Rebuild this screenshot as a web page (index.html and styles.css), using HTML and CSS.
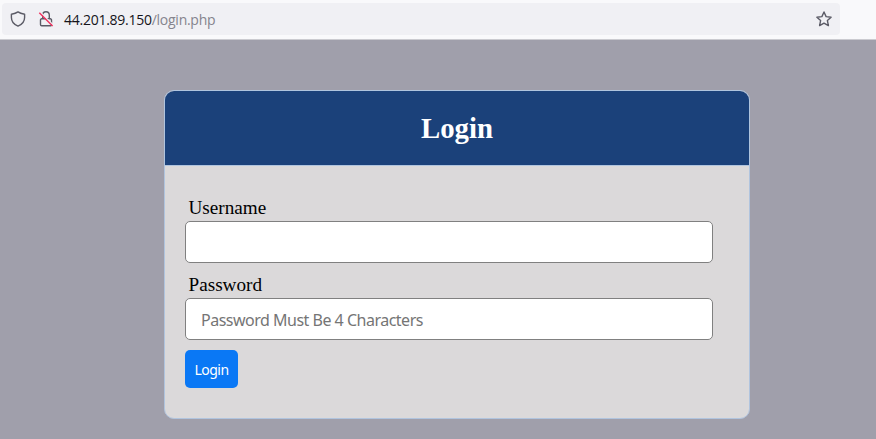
FILE: index.html
```html
<!DOCTYPE html>
<html lang="en">
<head>
<meta charset="utf-8">
<title>Login</title>
<link rel="stylesheet" href="styles.css">
</head>
<body>
<header class="toolbar">
  <div class="address">
    <svg class="icon shield" viewBox="0 0 16 16"><path d="M8 .9C6.500 2.100 4 2.900 1.400 3.200v3.200c0 3.700 2.600 7 6.600 8.700 4-1.700 6.600-5 6.600-8.700V3.200C12 2.900 9.500 2.100 8 .9z"/></svg>
    <svg class="icon lock" viewBox="0 0 16 16"><path d="M4.700 7.800V4a3.300 3.300 0 0 1 6.600 0v3.800M3.700 7.800h8.600a1.200 1.200 0 0 1 1.200 1.200v4.600a1.200 1.200 0 0 1-1.200 1.200H3.700a1.200 1.200 0 0 1-1.200-1.200V9a1.200 1.200 0 0 1 1.200-1.200z"/><path class="gap" d="M2.400 1.200l13 13"/><path class="slash" d="M1.300 1.700l13.300 13.300"/></svg>
    <span class="url"><span class="host">44.201.89.150</span><span class="path">/login.php</span></span>
    <svg class="icon star" viewBox="0 0 16 16"><path d="M8 1l2.100 4.600 5 .6-3.700 3.400 1 5L8 12.100l-4.400 2.500 1-5L.9 6.200l5-.6z"/></svg>
  </div>
</header>
<main class="page">
  <section class="card">
    <h2 class="title">Login</h2>
    <form class="form">
      <label class="label" for="user">Username</label>
      <input class="field" id="user" type="text">
      <label class="label" for="pass">Password</label>
      <input class="field" id="pass" type="password" placeholder="Password Must Be 4 Characters">
      <button class="submit" type="button">Login</button>
    </form>
  </section>
</main>
</body>
</html>
```
FILE: styles.css
```css
* { box-sizing: border-box; }
body {
  margin: 0;
  height: 439px;
  overflow: hidden;
  background: #a09fab;
  font-family: "Liberation Serif", serif;
}
.toolbar {
  height: 40px;
  padding: 3px 0 0 2px;
  background: #f9f9fb;
  border-bottom: 1px solid #cbcbd0;
}
.address {
  display: flex;
  align-items: center;
  width: 838px;
  height: 32px;
  padding: 0 8px;
  border-radius: 4px;
  background: #f0f0f4;
}
.icon {
  width: 16px;
  height: 16px;
  flex: none;
  fill: none;
  stroke: #5b5b66;
  stroke-width: 1.4;
  stroke-linejoin: round;
}
.lock { margin-left: 12px; }
.lock .gap { stroke: #f0f0f4; stroke-width: 1.5; }
.lock .slash { stroke: #f0325f; stroke-width: 1.4; }
.url {
  flex: 1;
  margin-left: 10px;
  font: 14px/20px "Open Sans", sans-serif;
  letter-spacing: -0.26px;
  position: relative;
  top: 1px;
}
.host { color: #15141a; }
.path { color: #85848d; }
.page {
  padding: 50px 0 0 164px;
}
.card {
  width: 586px;
  height: 329px;
  border: 1px solid #b0c4de;
  border-radius: 10px;
  background: #dbd9da;
  overflow: hidden;
}
.title {
  height: 75px;
  margin: 0;
  border-bottom: 1px solid #b0c4de;
  background: #1b417a;
  color: #fff;
  font-size: 28.8px;
  line-height: 75px;
  text-align: center;
}
.form { padding: 30px 20px; }
.label {
  display: block;
  height: 25px;
  margin-left: 3.5px;
  font-size: 19.2px;
  line-height: 24px;
}
.field {
  display: block;
  width: 528px;
  height: 42px;
  margin: 0 0 10px;
  padding: 2px 15px 0;
  border: 1px solid #808080;
  border-radius: 5px;
  background: #fff;
  font: 16px "Noto Sans", sans-serif;
}
.field::placeholder {
  color: #757575;
  opacity: 1;
  letter-spacing: -0.5px;
}
.submit {
  display: block;
  width: 53px;
  height: 38px;
  padding: 0;
  border: 0;
  border-radius: 5px;
  background: #0a78f5;
  color: #fff;
  font: 14px "Noto Sans", sans-serif;
  letter-spacing: -0.5px;
}
```
